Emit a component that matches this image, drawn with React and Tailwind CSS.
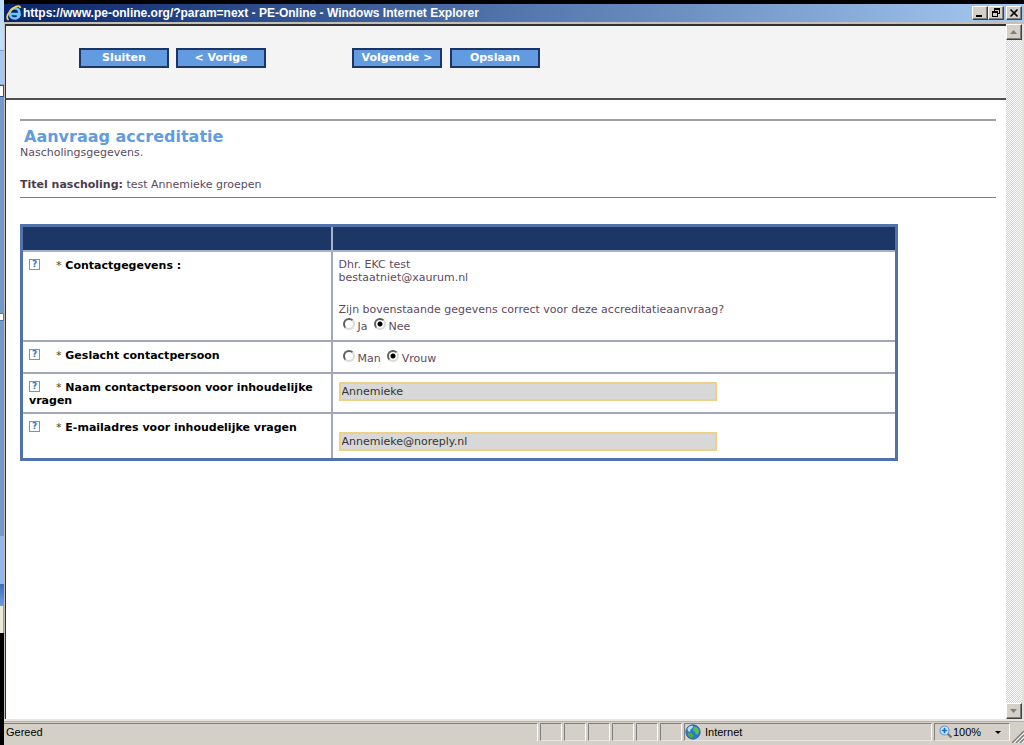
const toolbarLeft = ['Sluiten', '< Vorige']
const toolbarRight = ['Volgende >', 'Opslaan']

const IeLogo = () => (
  <svg viewBox="0 0 16 16" className="size-4 shrink-0" aria-hidden="true">
    <path d="M4 9h9.500c.3-3.400-1.500-5.700-4.600-5.700-3 0-5.100 2.300-5.100 5.300 0 3 2 4.900 5 4.900 2.100 0 3.700-1 4.500-2.700h-2.600" fill="none" stroke="#6cc6f7" strokeWidth="2.500" />
    <path d="M2.600 15C-.6 13.300 2 6.500 7.500 2.900c3.500-2.300 6.700-2.500 6.800.2" fill="none" stroke="#f3cf4c" strokeWidth="1.800" />
  </svg>
)

const GlobeIcon = () => (
  <svg viewBox="0 0 16 16" className="size-4 shrink-0" aria-hidden="true">
    <circle cx="8" cy="8" r="7.200" fill="#2f78cf" stroke="#285a9c" strokeWidth=".8" />
    <path d="M2.500 4.500C4 2 6 1.500 8 1.800L7.500 4 5.500 5.500 5 8 3 7z" fill="#b4dcf6" />
    <path d="M9 2.500l3.500 1.300 1.700 3.700-1.500 3-2-.5-.7-2.500L8 6.500z" fill="#5cc04a" />
    <path d="M3 8.500l3 .5 2.500 2.200L7.500 14 5 13.200 3 11z" fill="#4aae3d" />
  </svg>
)

const ZoomIcon = () => (
  <svg viewBox="0 0 14 14" className="size-3.5 shrink-0" aria-hidden="true">
    <path d="M8 8l4.500 4.500" stroke="#8a6a50" strokeWidth="2.200" />
    <circle cx="5.500" cy="5.500" r="4.500" fill="#d6ecfc" stroke="#5b9bd8" strokeWidth="1.200" />
    <path d="M5.500 2.800v5.400M2.800 5.500h5.400" stroke="#1d6cc4" strokeWidth="1.700" />
  </svg>
)

const Chrome = ({ label, children, className = '' }) => (
  <button
    type="button"
    aria-label={label}
    className={`flex shrink-0 items-center justify-center border border-t-white border-l-white border-r-[#404040] border-b-[#404040] bg-[#d4d0c8] shadow-[inset_-1px_-1px_0_#808080] ${className}`}
  >
    {children}
  </button>
)

const TitleBar = () => (
  <header className="flex h-[18px] items-center bg-linear-to-r from-[#0a246a] to-[#a6caf0] pr-0.5 pl-0.5">
    <IeLogo />
    <h1 className="flex-1 pl-px font-[Liberation_Sans,sans-serif] text-[12px] leading-4 font-bold whitespace-nowrap text-white">
      https://www.pe-online.org/?param=next - PE-Online - Windows Internet Explorer
    </h1>
    <Chrome label="Minimize" className="h-3.5 w-4">
      <svg viewBox="0 0 12 10" className="h-2.5 w-3"><path d="M2 7h6v2H2z" /></svg>
    </Chrome>
    <Chrome label="Restore" className="h-3.5 w-4">
      <svg viewBox="0 0 12 10" className="h-2.5 w-3" shapeRendering="crispEdges">
        <path d="M4 0h6v6H8V5h1V2H5v1H4zM2 3h6v6H2zM3 5v3h4V5z" fillRule="evenodd" />
      </svg>
    </Chrome>
    <Chrome label="Close" className="ml-0.5 h-3.5 w-4">
      <svg viewBox="0 0 12 10" className="h-2.5 w-3"><path d="M2.500 1.500l7 7M9.500 1.500l-7 7" stroke="#000" strokeWidth="1.600" /></svg>
    </Chrome>
  </header>
)

const ToolbarButton = ({ children }) => (
  <button type="button" className="h-5 w-[90px] border-2 border-[#1b3564] bg-[#629be0] text-center leading-4 font-bold whitespace-nowrap text-white">
    {children}
  </button>
)

const ScrollBar = () => (
  <div className="flex w-[18px] shrink-0 flex-col justify-between border-r-2 border-[#e4e1da] bg-[repeating-conic-gradient(#d4d0c8_0_25%,#fff_0_50%)] bg-size-[2px_2px]">
    <Chrome label="Scroll up" className="size-4">
      <svg viewBox="0 0 8 4" className="h-1 w-2"><path d="M0 4h7L3.500 0z" fill="#808080" /></svg>
    </Chrome>
    <Chrome label="Scroll down" className="size-4">
      <svg viewBox="0 0 8 4" className="h-1 w-2"><path d="M0 0h7L3.500 4z" fill="#808080" /></svg>
    </Chrome>
  </div>
)

const Radio = ({ name, label, defaultChecked }) => (
  <label className="flex items-start gap-[3px]">
    <input
      type="radio"
      name={name}
      defaultChecked={defaultChecked}
      className="size-3 appearance-none rounded-full border-2 border-t-[#606060] border-r-[#dedbd5] border-b-[#dedbd5] border-l-[#606060] bg-white checked:bg-[radial-gradient(circle,#000_2px,transparent_3px)]"
    />
    <span className="pt-0.5">{label}</span>
  </label>
)

const Row = ({ id, label, className, children }) => (
  <tr className={className}>
    <th scope="row" className="border-2 border-[#a4a7b9] pt-[7px] pr-1 pl-1.5 text-left align-top font-bold text-black">
      <button type="button" aria-label="Help" className="mr-4 inline-flex size-[11px] items-center justify-center border border-[#5b9bdc] align-[2px] text-[9px] leading-none text-[#3679c8]">
        ?
      </button>
      <span className="font-normal text-[#354a25]">*</span>{' '}
      {id ? <label htmlFor={id}>{label}</label> : label}
    </th>
    <td className="border-2 border-[#a4a7b9] px-1.5 pt-1.5 align-top">{children}</td>
  </tr>
)

const TextField = (props) => (
  <input
    type="text"
    className="block h-[19px] w-[378px] max-w-full border-2 border-[#eed087] bg-[#d8d8d8] px-px text-[11px] text-[#333]"
    {...props}
  />
)

const StatusBar = () => (
  <footer className="flex h-[26px] items-center gap-0.5 border-t-2 border-[#e8e6e1] bg-[#d4d0c8] pb-0.5 font-[Liberation_Sans,sans-serif] text-[11px] text-black shadow-[inset_0_1px_0_#b4b0a8]">
    <div className="flex h-[18px] flex-1 items-center border-t border-r border-t-[#808080] border-r-white pl-0.5">Gereed</div>
    {[1, 2, 3, 4, 5, 6].map((n) => (
      <div key={n} className="h-[18px] w-[22px] border border-t-[#808080] border-r-white border-b-[#e8e6e1] border-l-[#808080]" />
    ))}
    <div className="flex h-[18px] w-[248px] items-center gap-1 border border-t-[#808080] border-r-white border-b-[#e8e6e1] border-l-[#808080]">
      <GlobeIcon />
      Internet
    </div>
    <button type="button" className="flex h-[18px] w-[76px] items-center border border-t-[#808080] border-r-white border-b-[#e8e6e1] border-l-[#808080] pl-1">
      <ZoomIcon />
      <span className="w-[42px] text-left">100%</span>
      <svg viewBox="0 0 6 3" className="h-[3px] w-1.5"><path d="M0 0h6L3 3z" /></svg>
    </button>
    <svg viewBox="0 0 12 12" className="size-3 self-end" aria-hidden="true">
      <path d="M0 12L12 0M4 12l8-8M8 12l4-4" stroke="#808080" strokeWidth="1.500" />
      <path d="M2 12L12 2M6 12l6-6M10 12l2-2" stroke="#fff" />
    </svg>
  </footer>
)

// sliver of the window underneath
const BackgroundWindow = () => (
  <div className="flex w-1 shrink-0 flex-col bg-black" aria-hidden="true">
    <div className="h-[50px] bg-[#bfdcf9]" />
    <div className="h-[35px] border-y border-[#7ba2d8] bg-[#a9c7ee]" />
    <div className="h-3 border border-l-0 border-[#33507c] bg-white" />
    <div className="h-[216px] bg-[#7399ca]" />
    <div className="h-2 border border-l-0 border-[#5573a4] bg-white" />
    <div className="h-[215px] bg-[#7399ca]" />
    <div className="h-12 bg-[#91b7ee]" />
    <div className="h-[22px] bg-linear-to-b from-[#3b6bb9] to-[#6d9ee4]" />
    <div className="h-[27px] border-r border-[#9c988c] bg-[#ece9d8]" />
  </div>
)

const App = () => {
  return (
    <div className="flex min-h-screen bg-black font-[DejaVu_Sans,Verdana,sans-serif] text-[11px] leading-[13px] text-[#5c4a5e]">
      <BackgroundWindow />
      <div className="flex min-w-0 flex-1 flex-col border-t-4 border-black">
        <TitleBar />
        <div className="flex flex-1 border-t-2 border-l border-[#c4c0b8]">
          <div className="flex min-w-0 flex-1 flex-col border-t-2 border-l border-[#303030] bg-white">
            <nav className="flex h-[74px] items-start gap-[86px] border-b-2 border-[#505050] bg-[#f4f4f4] pt-[22px] pl-[73px]">
              <div className="flex gap-[7px]">
                {toolbarLeft.map((label) => <ToolbarButton key={label}>{label}</ToolbarButton>)}
              </div>
              <div className="flex gap-2">
                {toolbarRight.map((label) => <ToolbarButton key={label}>{label}</ToolbarButton>)}
              </div>
            </nav>

            <main className="pt-[19px] pr-2.5 pl-3.5">
              <section className="border-t-2 border-b border-[#a0a0a0] border-b-[#808080] pt-1.5 pb-1.5">
                <h2 className="pl-1 text-base leading-[19px] font-bold text-[#629be0]">Aanvraag accreditatie</h2>
                <p>Nascholingsgegevens.</p>
                <p className="pt-[19px]">
                  <strong className="text-[#4b3c4d]">Titel nascholing:</strong> test Annemieke groepen
                </p>
              </section>

              <form className="pt-[26px]">
                <table className="w-[90%] table-fixed border-collapse border-3 border-[#5272ac]">
                  <colgroup>
                    <col className="w-[310px]" />
                    <col />
                  </colgroup>
                  <thead>
                    <tr className="h-[25px] bg-[#1c3765]">
                      <td className="border-2 border-[#a4b3cd]" />
                      <td className="border-2 border-[#a4b3cd]" />
                    </tr>
                  </thead>
                  <tbody>
                    <Row label="Contactgegevens :" className="h-[90px]">
                      <p>Dhr. EKC test</p>
                      <p>bestaatniet@xaurum.nl</p>
                      <p className="pt-[19px]">Zijn bovenstaande gegevens correct voor deze accreditatieaanvraag?</p>
                      <div className="flex gap-1.5 pt-0.5 pl-1">
                        <Radio name="correct" label="Ja" />
                        <Radio name="correct" label="Nee" defaultChecked />
                      </div>
                    </Row>
                    <Row label="Geslacht contactpersoon" className="h-8">
                      <div className="flex gap-1.5 pt-0.5 pl-1">
                        <Radio name="gender" label="Man" />
                        <Radio name="gender" label="Vrouw" defaultChecked />
                      </div>
                    </Row>
                    <Row id="name" label="Naam contactpersoon voor inhoudelijke vragen" className="h-10">
                      <div className="pt-0.5">
                        <TextField id="name" defaultValue="Annemieke" />
                      </div>
                    </Row>
                    <Row id="email" label="E-mailadres voor inhoudelijke vragen" className="h-[47px]">
                      <div className="pt-3">
                        <TextField id="email" defaultValue="Annemieke@noreply.nl" />
                      </div>
                    </Row>
                  </tbody>
                </table>
              </form>
            </main>
          </div>
          <ScrollBar />
        </div>
        <StatusBar />
      </div>
    </div>
  )
}

export default App
